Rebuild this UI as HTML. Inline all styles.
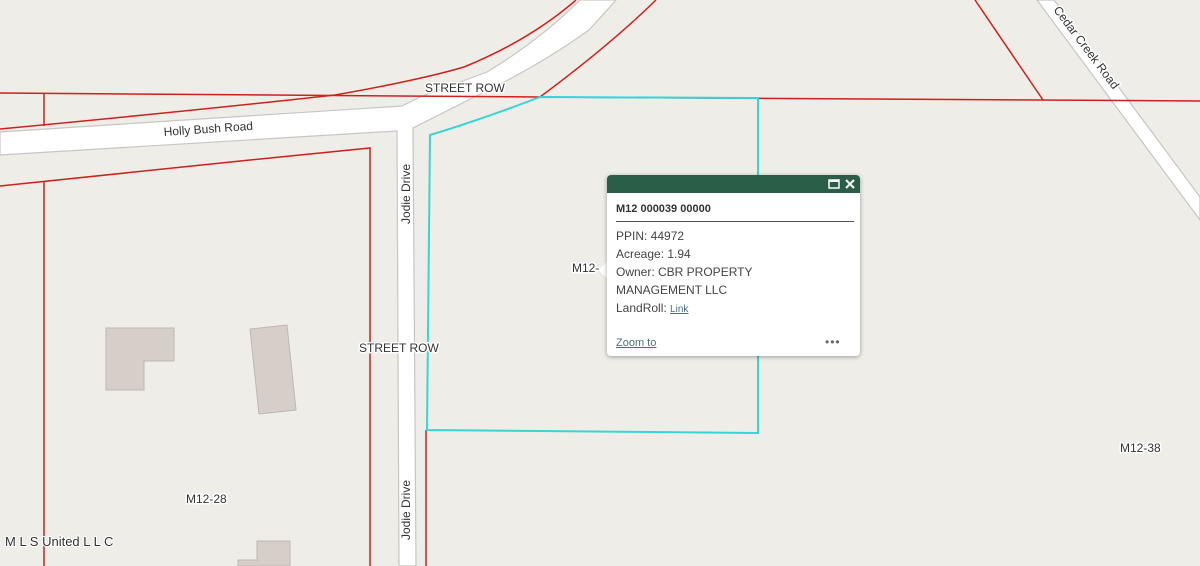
<!DOCTYPE html>
<html><head><meta charset="utf-8"><style>
html,body{margin:0;padding:0;width:1200px;height:566px;overflow:hidden;background:#efede8;font-family:"Liberation Sans",Arial,sans-serif}
svg{position:absolute;left:0;top:0}
.lbl{font-family:"Liberation Sans",Arial,sans-serif;font-size:12px;fill:#333;stroke:#fff;stroke-width:3px;paint-order:stroke;stroke-linejoin:round}
.pop{position:absolute;left:607px;top:175px;width:253px;height:181px;background:#fff;border-radius:4px;box-shadow:0 1px 5px rgba(0,0,0,.35);overflow:hidden}
.hd{height:18px;background:#2b5e48}
.ti{font-size:11px;font-weight:bold;color:#333;margin:10px 8px 0 9px;padding-bottom:6px;border-bottom:1px solid #555;width:238px}
.bd{font-size:12px;color:#444;line-height:18px;margin:5px 0 0 9px}
.lk{font-size:10px;color:#4b6e7e;text-decoration:underline}
</style></head><body>
<svg width="1200" height="566" viewBox="0 0 1200 566">
<!-- roads -->
<path d="M0,132 L402,106 L420,97 Q455,84 487,72 Q540,40 580,0 L616,0 Q600,18 589,30 Q550,58 504,82 L413,128 L416,566 L399,566 L397,131 L0,155 Z" fill="#fff" stroke="#c8c6c2" stroke-width="1.2"/>
<path d="M1037,0 L1054,0 L1200,197 L1200,220 Z" fill="#fff" stroke="#c8c6c2" stroke-width="1.2"/>
<!-- buildings -->
<path d="M106,328 L174,328 L174,361 L144,361 L144,390 L106,390 Z" fill="#d6cec9" stroke="#bdb6b1"/>
<path d="M250,329 L287,325 L296,410 L259,414 Z" fill="#d6cec9" stroke="#bdb6b1"/>
<path d="M257,541 L290,541 L290,566 L238,566 L238,560 L257,560 Z" fill="#d6cec9" stroke="#bdb6b1"/>
<!-- red lines -->
<g fill="none" stroke="#d0201c" stroke-width="1.5">
<path d="M0,93 L540,97 L1200,101"/>
<path d="M44,93 L44,126"/>
<path d="M0,129 Q200,110 335,95 Q420,80 464,67 Q530,40 576,0"/>
<path d="M540,97 Q610,45 656,0"/>
<path d="M0,186 L250,160 L370,148 L370,566"/>
<path d="M44,182 L44,566"/>
<path d="M426,430 L426,566"/>
<path d="M975,0 L1043,100"/>
</g>
<!-- cyan parcel -->
<path d="M540,97 L758,98 L758,433 L427,430 L430,135 Q480,120 540,97 Z" fill="none" stroke="#36d6d6" stroke-width="2"/>
<!-- labels -->
<text class="lbl" x="425" y="92">STREET ROW</text>
<text class="lbl" x="164" y="136" font-size="11" transform="rotate(-4 164 136)">Holly Bush Road</text>
<text class="lbl" x="410" y="224" transform="rotate(-90 410 224)">Jodie Drive</text>
<text class="lbl" x="410" y="540" transform="rotate(-90 410 540)">Jodie Drive</text>
<text class="lbl" x="359" y="352">STREET ROW</text>
<text class="lbl" x="572" y="272">M12-</text>
<text class="lbl" x="186" y="503">M12-28</text>
<text class="lbl" x="1120" y="452">M12-38</text>
<text class="lbl" x="1053" y="10" font-size="11" transform="rotate(53 1053 10)">Cedar Creek Road</text>
<text x="5" y="546" font-size="13" fill="#333" stroke="#fff" stroke-width="2" paint-order="stroke" font-family="Liberation Sans, sans-serif">M L S United L L C</text>
<path d="M607,262 L598,270 L607,278 Z" fill="#fff"/>
</svg>
<div class="pop">
<div class="hd">
<svg width="253" height="18" style="position:absolute;left:0;top:0"><rect x="222" y="5" width="10" height="8" fill="none" stroke="#fff" stroke-width="1.5"/><rect x="222" y="5" width="10" height="2" fill="#fff"/><path d="M239,5 L247,13 M247,5 L239,13" stroke="#fff" stroke-width="2"/></svg>
</div>
<div class="ti">M12 000039 00000</div>
<div class="bd">PPIN: 44972<br>Acreage: 1.94<br>Owner: CBR PROPERTY<br>MANAGEMENT LLC<br>LandRoll: <span class="lk">Link</span></div>
<div style="position:absolute;left:9px;top:162px;font-size:11px;color:#4b6e7e;text-decoration:underline">Zoom to</div>
<div style="position:absolute;left:218px;top:160px;font-size:12px;color:#666;letter-spacing:1px">•••</div>
</div>
</body></html>
